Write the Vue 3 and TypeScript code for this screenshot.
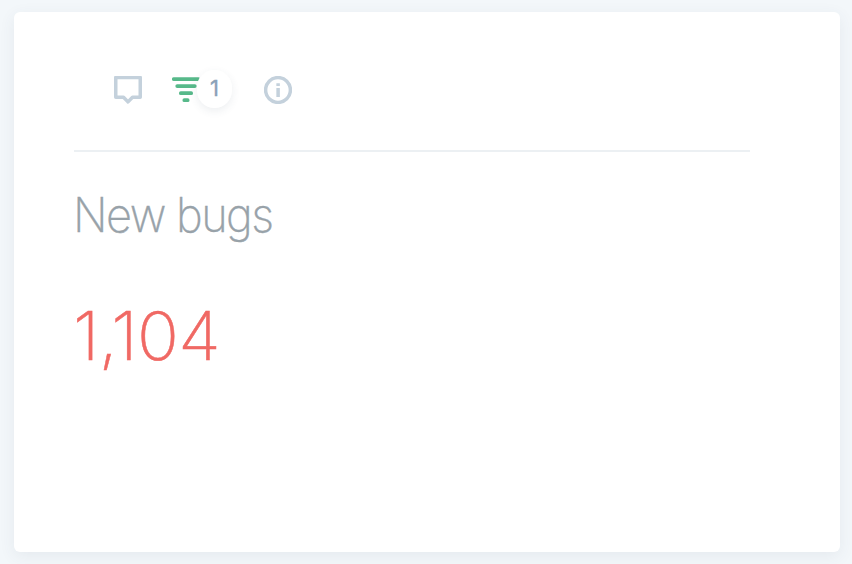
<script setup lang="ts">
import { ref } from 'vue'

const title = ref<string>('New bugs')
const count = ref<number>(1104)
const filters = ref<number>(1)
</script>

<template>
  <main class="page">
    <section class="card">
      <header class="toolbar">
        <svg class="icon comment" viewBox="0 0 28 29"><path d="M1.75 1.5H26.25V21.3H18.5L14 25.9L9.5 21.3H1.75Z" /></svg>
        <div class="filter">
          <svg class="bars" viewBox="0 0 28 26"><path d="M1.8 2.1H26.2M5.2 9.1H22.8M8.8 16.2H19.2M12.3 23.2H15.7" /></svg>
          <span class="badge">{{ filters }}</span>
        </div>
        <svg class="icon info" viewBox="0 0 28 28"><circle cx="14" cy="14" r="12.4" /><path d="M14.1 12V21M14.1 7.3V10" /></svg>
      </header>
      <h1 class="title">{{ title }}</h1>
      <p class="count">{{ count.toLocaleString('en-US') }}</p>
    </section>
  </main>
</template>

<style>
body { background: #f3f7fa; }
</style>

<style scoped>
.page { box-sizing: border-box; height: 564px; padding: 12px 12px 12px 14px; background: #f3f7fa; }
.card { box-sizing: border-box; height: 540px; padding: 56px 90px 0 59px; border-radius: 6px; background: #fff; box-shadow: 0 4px 16px rgba(60, 80, 100, .08); font-family: Inter, sans-serif; }
.toolbar { display: flex; align-items: flex-start; box-sizing: border-box; height: 84px; margin-left: 1px; padding-left: 40px; border-bottom: 2px solid #ecf0f3; }
svg { display: block; fill: none; }
.icon { stroke: #c4d1dc; stroke-width: 3.5; margin-top: 8px; }
.comment { width: 28px; height: 29px; stroke-linejoin: round; }
.filter { display: flex; margin-left: 30px; }
.bars { width: 28px; height: 26px; margin-top: 9px; stroke: #57b98a; stroke-width: 3.7; stroke-linecap: round; }
.badge { width: 35px; height: 38px; margin: 2px 0 0 -3px; border-radius: 17px; background: #fff; box-shadow: 0 3px 8px rgba(60, 80, 100, .09); color: #8ba2b8; font-size: 22px; font-weight: 400; line-height: 37px; text-align: center; -webkit-text-stroke: .4px; }
.info { width: 28px; height: 28px; margin-left: 32px; }
.title { margin: 33px 0 0; color: #98a2a9; font-size: 47.5px; font-weight: 200; line-height: 60px; letter-spacing: -1.6px; transform: scaleX(.95); transform-origin: left; -webkit-text-stroke: .4px; }
.count { margin: 51px 0 0; color: #f06964; font-size: 67px; font-weight: 200; line-height: 80px; letter-spacing: -.6px; transform: scaleX(1.035); transform-origin: left; -webkit-text-stroke: .5px; }
</style>
